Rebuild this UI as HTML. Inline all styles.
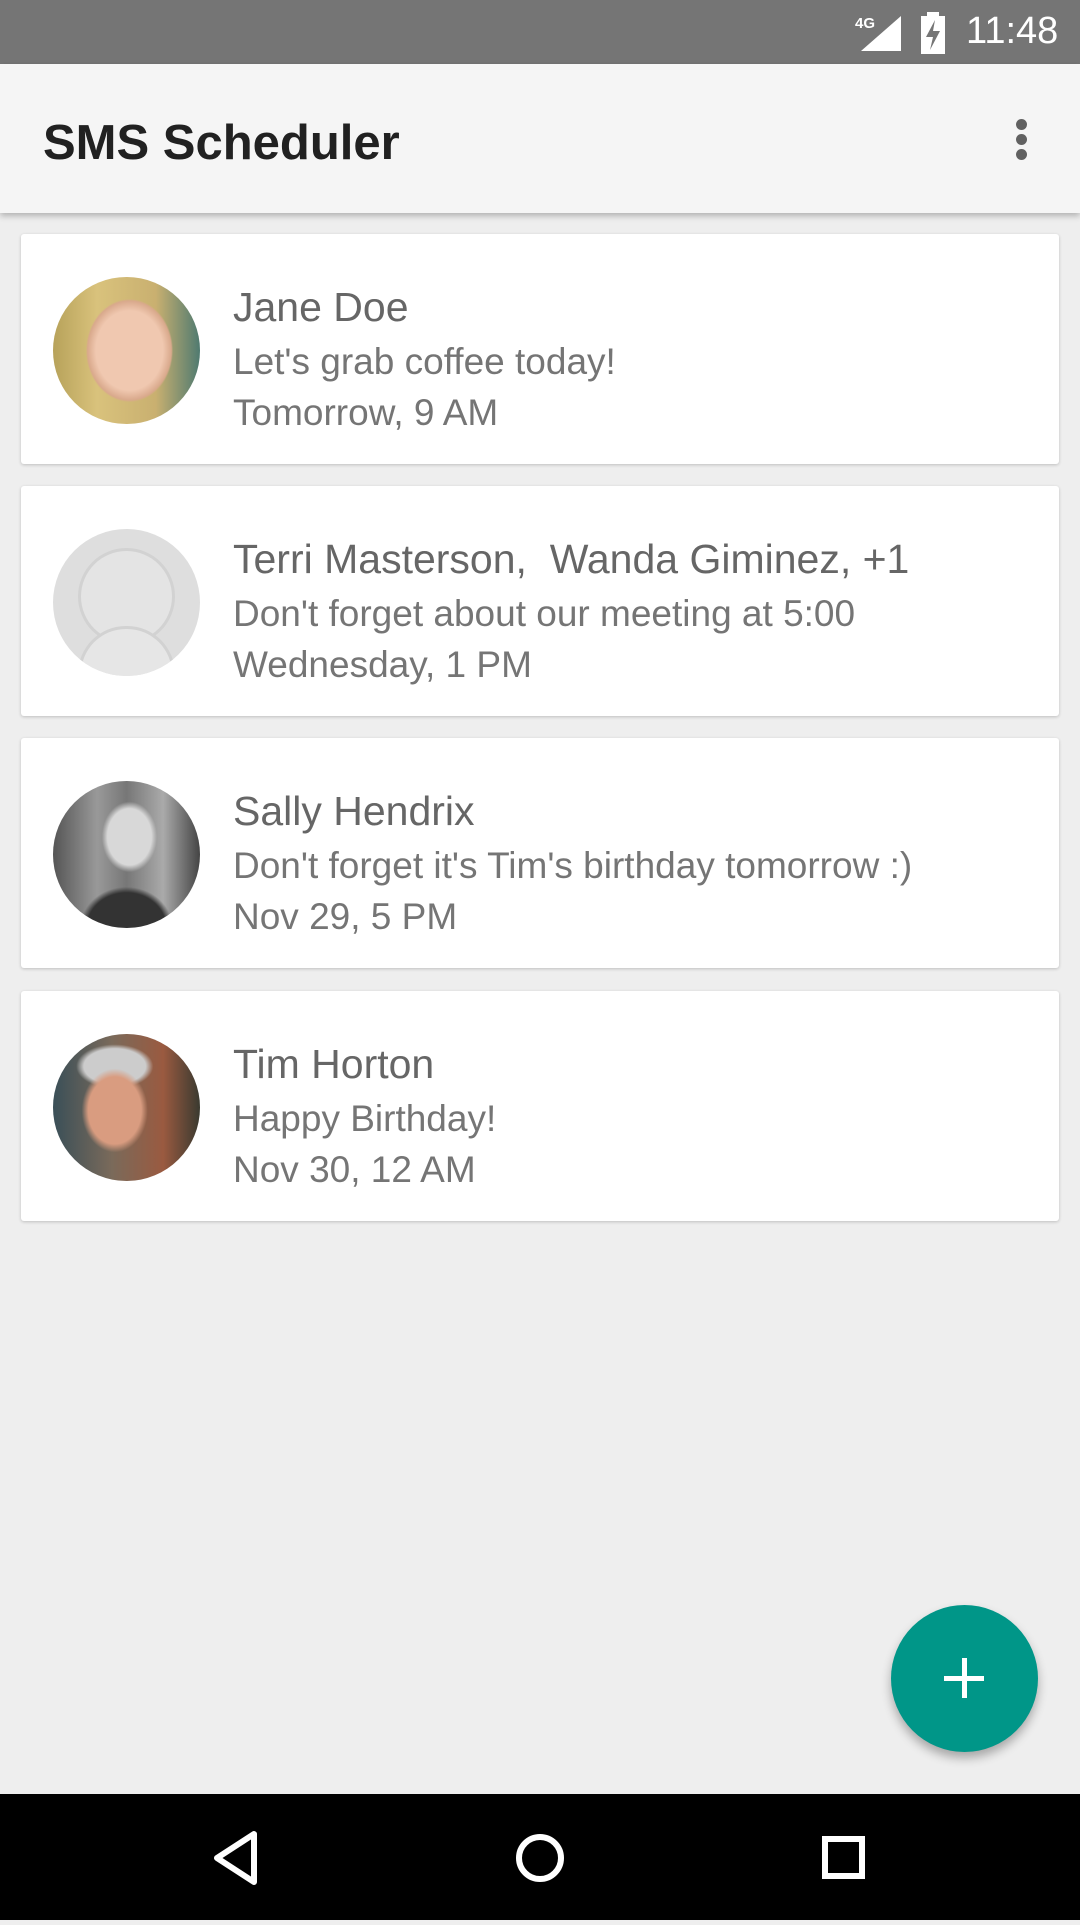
<!DOCTYPE html>
<html><head><meta charset="utf-8"><style>
*{margin:0;padding:0;box-sizing:border-box}
body{width:1080px;height:1920px;background:#eeeeee;font-family:"Liberation Sans",sans-serif;position:relative;overflow:hidden}
.sb{position:absolute;left:0;top:0;width:1080px;height:64px;background:#757575;color:#fff}
.ab{position:absolute;left:0;top:64px;width:1080px;height:149px;background:#f5f5f5;box-shadow:0 3px 6px rgba(0,0,0,.25)}
.ab h1{position:absolute;left:43px;top:51px;font-size:49px;font-weight:bold;color:#212121;letter-spacing:0px}
.dot{position:absolute;left:1016px;width:11px;height:11px;border-radius:50%;background:#616161}
.card{position:absolute;left:21px;width:1038px;height:230px;background:#fff;border-radius:3px;box-shadow:0 1px 3px rgba(0,0,0,.2)}
.av{position:absolute;left:32px;top:43px;width:147px;height:147px;border-radius:50%;overflow:hidden}
.n{position:absolute;left:212px;top:50px;font-size:41px;color:#666;white-space:nowrap}
.m{position:absolute;left:212px;top:107px;font-size:37px;color:#757575;white-space:nowrap}
.d{position:absolute;left:212px;top:158px;font-size:37px;color:#757575;white-space:nowrap}
.fab{position:absolute;left:891px;top:1605px;width:147px;height:147px;border-radius:50%;background:#009688;box-shadow:0 6px 10px rgba(0,0,0,.3)}
.nav{position:absolute;left:0;top:1794px;width:1080px;height:126px;background:#000}
</style></head><body>
<div class="sb">
<svg style="position:absolute;left:855px;top:14px" width="48" height="38"><text x="0" y="14" font-size="15" fill="#fff" font-family="Liberation Sans" font-weight="bold">4G</text><polygon points="6,37 46,37 46,2" fill="#fff"/></svg>
<svg style="position:absolute;left:920px;top:12px" width="26" height="42"><rect x="7" y="0" width="12" height="5" fill="#fff"/><rect x="1" y="4" width="24" height="38" fill="#fff"/><polygon points="15,8 6,25 13,25 10,38 20,19 13,19" fill="#757575"/></svg>
<div style="position:absolute;left:966px;top:10px;font-size:38px;color:#fff">11:48</div>
</div>
<div class="ab"><h1>SMS Scheduler</h1>
<div class="dot" style="top:55px"></div><div class="dot" style="top:70px"></div><div class="dot" style="top:85px"></div></div>

<div class="card" style="top:234px"><div class="av" style="background:radial-gradient(ellipse 38% 45% at 52% 50%,#f0c8b0 60%,#d9a98c 75%,transparent 78%),linear-gradient(90deg,#b7a25a,#d9c27c 30%,#c9b070 70%,#4f7a70)"></div>
<div class="n">Jane Doe</div><div class="m">Let's grab coffee today!</div><div class="d">Tomorrow, 9 AM</div></div>

<div class="card" style="top:486px"><div class="av" style="background:#dedede"><div style="position:absolute;left:28px;top:22px;width:91px;height:91px;border-radius:50%;background:#e4e4e4;box-shadow:0 0 0 3px #d2d2d2"></div><div style="position:absolute;left:28px;top:100px;width:91px;height:60px;border-radius:45px 45px 0 0;background:#e6e6e6;box-shadow:0 0 0 3px #d2d2d2"></div></div>
<div class="n">Terri Masterson,&nbsp; Wanda Giminez, +1</div><div class="m">Don't forget about our meeting at 5:00</div><div class="d">Wednesday, 1 PM</div></div>

<div class="card" style="top:738px"><div class="av" style="background:radial-gradient(ellipse 25% 32% at 52% 38%,#d8d8d8 60%,transparent 75%),radial-gradient(ellipse 45% 40% at 50% 100%,#333 60%,transparent 70%),linear-gradient(90deg,#555,#999 30%,#777 50%,#aaa 75%,#444)"></div>
<div class="n">Sally Hendrix</div><div class="m">Don't forget it's Tim's birthday tomorrow :)</div><div class="d">Nov 29, 5 PM</div></div>

<div class="card" style="top:991px"><div class="av" style="background:radial-gradient(ellipse 30% 38% at 42% 52%,#d99c80 60%,transparent 75%),radial-gradient(ellipse 35% 20% at 42% 22%,#ccc 60%,transparent 75%),linear-gradient(90deg,#3a4f58,#7a6a5a 40%,#9a5a40 75%,#3a3a30)"></div>
<div class="n">Tim Horton</div><div class="m">Happy Birthday!</div><div class="d">Nov 30, 12 AM</div></div>

<div class="fab"><div style="position:absolute;left:53px;top:71px;width:40px;height:5px;background:#fff"></div><div style="position:absolute;left:71px;top:53px;width:5px;height:40px;background:#fff"></div></div>

<div class="nav"><svg width="1080" height="126">
<polygon points="254,40 254,88 217,64" fill="none" stroke="#fff" stroke-width="6" stroke-linejoin="round"/>
<circle cx="540" cy="64" r="21" fill="none" stroke="#fff" stroke-width="6"/>
<rect x="825" y="45" width="37" height="37" fill="none" stroke="#fff" stroke-width="6"/>
</svg></div>
</body></html>
